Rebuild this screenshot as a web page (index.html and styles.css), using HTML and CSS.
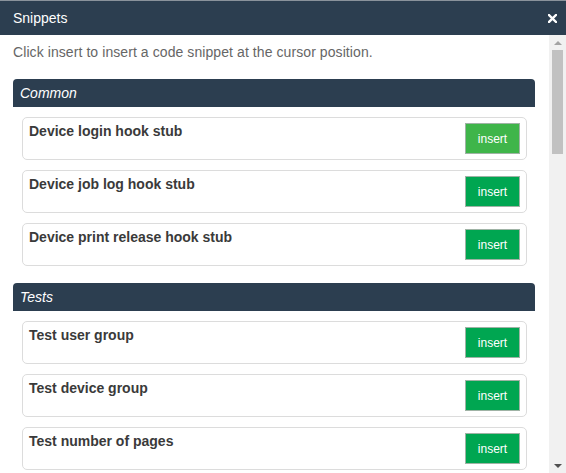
FILE: index.html
```html
<!DOCTYPE html>
<html>
<head>
<meta charset="utf-8">
<title>Snippets</title>
<link rel="stylesheet" href="styles.css">
</head>
<body>
<div class="dialog">
  <div class="titlebar">
    <span class="title">Snippets</span>
    <svg class="close" width="9" height="9" viewBox="0 0 9 9"><path d="M1 1L8 8M8 1L1 8" stroke="#fff" stroke-width="2.4" stroke-linecap="square"/></svg>
  </div>
  <div class="main">
    <div class="content">
      <p class="desc">Click insert to insert a code snippet at the cursor position.</p>
      <div class="section">
        <div class="section-head">Common</div>
        <div class="card"><span class="card-title">Device login hook stub</span><button class="btn btn-hover">insert</button></div>
        <div class="card"><span class="card-title">Device job log hook stub</span><button class="btn">insert</button></div>
        <div class="card"><span class="card-title">Device print release hook stub</span><button class="btn">insert</button></div>
      </div>
      <div class="section">
        <div class="section-head">Tests</div>
        <div class="card"><span class="card-title">Test user group</span><button class="btn">insert</button></div>
        <div class="card"><span class="card-title">Test device group</span><button class="btn">insert</button></div>
        <div class="card"><span class="card-title">Test number of pages</span><button class="btn">insert</button></div>
      </div>
    </div>
    <div class="scrollbar">
      <div class="sb-btn"><span class="tri-up"></span></div>
      <div class="sb-thumb"></div>
      <div class="sb-track"></div>
      <div class="sb-btn"><span class="tri-down"></span></div>
    </div>
  </div>
</div>
</body>
</html>
```

FILE: styles.css
```css
html, body {
  margin: 0;
  padding: 0;
  background: #fff;
}
body {
  width: 566px;
  height: 473px;
  overflow: hidden;
  font-family: "Liberation Sans", Arial, sans-serif;
}
.dialog {
  display: flex;
  flex-direction: column;
  width: 566px;
  height: 473px;
}
.titlebar {
  flex: 0 0 auto;
  height: 34px;
  border-top: 1px solid #8a929b;
  background: #2c3e50;
  display: flex;
  align-items: center;
  justify-content: space-between;
  padding: 0 9px 0 13px;
  box-sizing: content-box;
}
.title {
  color: #fff;
  font-size: 14px;
  margin-top: -1px;
}
.close {
  display: block;
  margin-top: 1px;
}
.main {
  flex: 1 1 auto;
  display: flex;
  min-height: 0;
}
.content {
  flex: 1 1 auto;
  overflow: hidden;
  padding: 9px 14px 0 13px;
}
.desc {
  margin: 0 0 19px 0;
  font-size: 14px;
  line-height: 16px;
  color: #666;
  letter-spacing: 0.08px;
}
.section {
  display: flex;
  flex-direction: column;
  padding-bottom: 7px;
}
.section-head {
  height: 28px;
  line-height: 28px;
  padding: 0 7px;
  background: #2c3e50;
  color: #fff;
  font-size: 14px;
  font-style: italic;
  border-radius: 4px 4px 0 0;
  margin-bottom: 10px;
}
.card {
  display: flex;
  justify-content: space-between;
  align-items: flex-start;
  margin: 0 8px 10px 9px;
  padding: 5px 6px;
  border: 1px solid #dcdcdc;
  border-radius: 5px;
}
.card-title {
  font-size: 14px;
  line-height: 16px;
  font-weight: bold;
  color: #3a3a3a;
}
.btn {
  width: 55px;
  height: 31px;
  padding: 0;
  border: 1px solid #9fb3a5;
  background: #00a651;
  color: #fff;
  font-family: "Liberation Sans", Arial, sans-serif;
  font-size: 12px;
  cursor: pointer;
}
.btn-hover {
  background: #3fb54a;
}
.scrollbar {
  flex: 0 0 17px;
  width: 17px;
  background: #f1f1f1;
  display: flex;
  flex-direction: column;
}
.sb-btn {
  height: 15px;
  display: flex;
  align-items: center;
  justify-content: center;
}
.tri-up {
  width: 0;
  height: 0;
  border-left: 4px solid transparent;
  border-right: 4px solid transparent;
  border-bottom: 4px solid #a3a3a3;
}
.tri-down {
  width: 0;
  height: 0;
  border-left: 4px solid transparent;
  border-right: 4px solid transparent;
  border-top: 4px solid #505050;
}
.sb-thumb {
  height: 104px;
  margin: 0 3px;
  background: #c1c1c1;
}
.sb-track {
  flex: 1 1 auto;
}
```
